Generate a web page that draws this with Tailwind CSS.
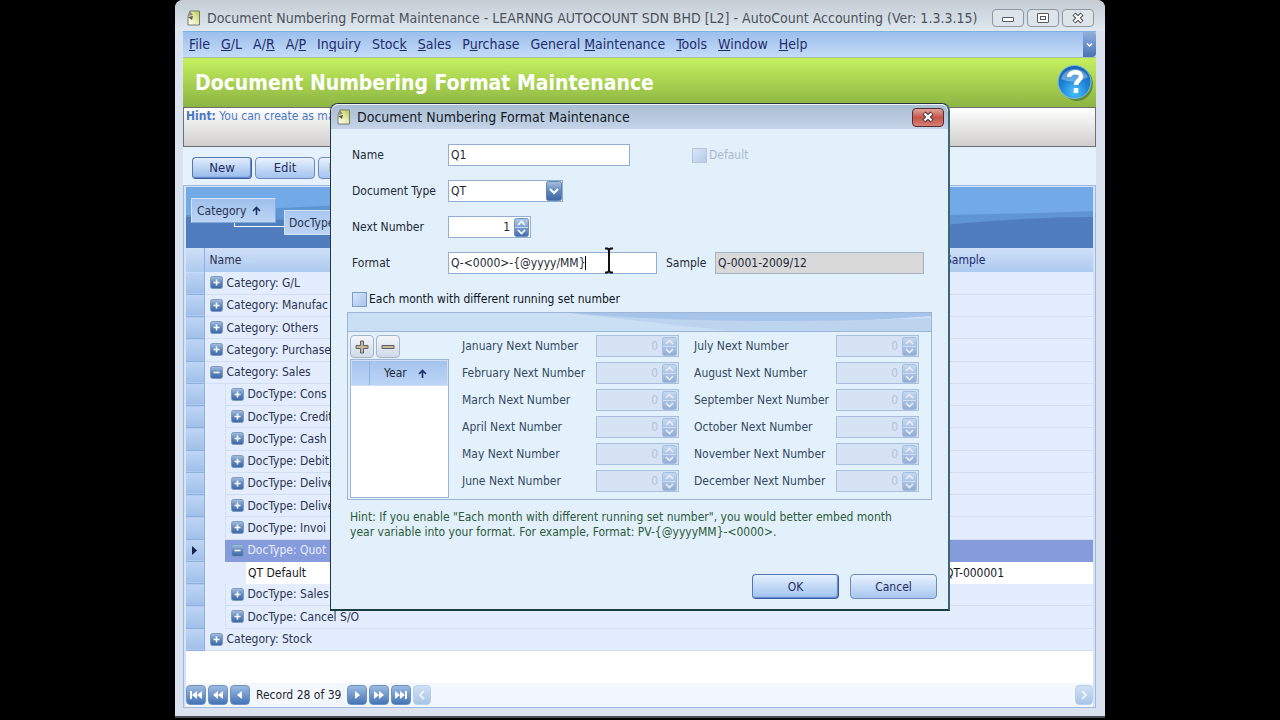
<!DOCTYPE html>
<html lang="en">
<head>
<meta charset="utf-8">
<title>Document Numbering Format Maintenance</title>
<script src="https://cdn.jsdelivr.net/npm/@tailwindcss/browser@4"></script>
</head>
<body class="bg-black font-['DejaVu_Sans_Condensed','DejaVu_Sans',sans-serif] text-xs text-[#2a3350]">
<svg class="absolute h-0 w-0" aria-hidden="true">
  <defs>
    <linearGradient id="gBlue" x1="0" y1="0" x2="0" y2="1"><stop offset="0" stop-color="#b5cdec"/><stop offset="1" stop-color="#3f6cae"/></linearGradient>
    <linearGradient id="gDrop" x1="0" y1="0" x2="0" y2="1"><stop offset="0" stop-color="#a9c0de"/><stop offset="0.5" stop-color="#6088bd"/><stop offset="1" stop-color="#3c66a5"/></linearGradient>
    <radialGradient id="gHelp" cx="0.5" cy="0.8" r="0.8"><stop offset="0" stop-color="#49c4fb"/><stop offset="0.5" stop-color="#2185d9"/><stop offset="1" stop-color="#1a5fae"/></radialGradient>
    <linearGradient id="gDoc" x1="1" y1="0" x2="0" y2="1"><stop offset="0" stop-color="#b5c840"/><stop offset="0.5" stop-color="#e8edb0"/><stop offset="1" stop-color="#ffffff"/></linearGradient>
    <symbol id="doc" viewBox="0 0 14 16"><path d="M3 1h9.500v14H1V6z" fill="url(#gDoc)" stroke="#777b6c"/><path d="M3 1L1 6l5-1z" fill="#8e9184"/><path d="M1 7l5-1-1 4z" fill="#55584c"/></symbol>
    <symbol id="plus" viewBox="0 0 13 13"><rect x="0.500" y="0.500" width="12" height="12" rx="2" fill="url(#gDrop)" stroke="#7d9cc4"/><path d="M6.500 3.500v6M3.500 6.500h6" stroke="#fff" stroke-width="1.500"/></symbol>
    <symbol id="minus" viewBox="0 0 13 13"><rect x="0.500" y="0.500" width="12" height="12" rx="2" fill="url(#gDrop)" stroke="#7d9cc4"/><path d="M3.500 6.500h6" stroke="#fff" stroke-width="1.500"/></symbol>
    <symbol id="spin" viewBox="0 0 15 19"><rect x="0.500" y="0.500" width="14" height="18" rx="2" fill="url(#gBlue)" stroke="#6d8fbd"/><path d="M1 9.500h13" stroke="#c8d9ef"/><path d="M4 7l3.500-3.500L11 7M4 12l3.500 3.500L11 12" fill="none" stroke="#fff" stroke-width="1.600"/></symbol>
    <symbol id="up" viewBox="0 0 9 9"><path d="M4.500 9V2M1 5l3.500-3.500L8 5" fill="none" stroke="#1c2f66" stroke-width="1.600"/></symbol>
  </defs>
</svg>

<main class="relative mx-auto flex h-[718px] w-full max-w-[930px] flex-col overflow-hidden rounded-t-lg border-b-2 border-[#4b4a50] bg-[#d9e2ee] pr-[9px] pl-2">
  <header class="-mr-[9px] -ml-2 flex h-[31px] shrink-0 items-center bg-gradient-to-b from-[#c4cbd3] to-[#dfe9f2] pt-[5px] pr-[11px] pl-[12px]">
    <svg class="h-4 w-[14px]"><use href="#doc"/></svg>
    <h1 class="ml-[6px] flex-1 text-[14px] whitespace-nowrap text-[#4d5258]">Document Numbering Format Maintenance - LEARNNG AUTOCOUNT SDN BHD [L2] - AutoCount Accounting (Ver: 1.3.3.15)</h1>
    <div class="flex gap-[3px]">
      <button aria-label="Minimize" class="grid h-[18px] w-8 place-items-center rounded-sm border border-[#8f989f] bg-[#dde4ea]"><svg class="h-3 w-[14px]" viewBox="0 0 14 12"><rect x="1.500" y="5.500" width="11" height="4" rx="0.500" fill="#fff" stroke="#55585d"/></svg></button>
      <button aria-label="Restore" class="grid h-[18px] w-8 place-items-center rounded-sm border border-[#8f989f] bg-[#dde4ea]"><svg class="h-3 w-[14px]" viewBox="0 0 14 12"><rect x="1.500" y="1.500" width="11" height="9" rx="0.500" fill="#fff" stroke="#55585d"/><rect x="4.500" y="4.500" width="5" height="3" fill="#fff" stroke="#55585d"/></svg></button>
      <button aria-label="Close" class="grid h-[18px] w-8 place-items-center rounded-sm border border-[#8f989f] bg-[#dde4ea]"><svg class="h-3 w-[14px]" viewBox="0 0 14 12"><path d="M3 2l8 8M11 2l-8 8" stroke="#55585d" stroke-width="4.500"/><path d="M3.500 2.500l7 7M10.500 2.500l-7 7" stroke="#fff" stroke-width="2.200"/></svg></button>
    </div>
  </header>

  <nav class="flex h-[27px] shrink-0 items-center gap-[11px] border-t border-b border-t-[#7fb0e0] border-b-[#a5bfa8] bg-gradient-to-b from-[#9dbfec] to-[#c3dbf8] pl-[6px] text-[14px] whitespace-nowrap text-[#1f2c6b]">
    <a href="#"><u>F</u>ile</a><a href="#"><u>G</u>/L</a><a href="#">A/<u>R</u></a><a href="#">A/<u>P</u></a><a href="#">In<u>q</u>uiry</a><a href="#">Stoc<u>k</u></a><a href="#"><u>S</u>ales</a><a href="#">P<u>u</u>rchase</a><a href="#">General <u>M</u>aintenance</a><a href="#"><u>T</u>ools</a><a href="#"><u>W</u>indow</a><a href="#"><u>H</u>elp</a>
    <button aria-label="More menus" class="ml-auto grid h-full w-[13px] place-items-center rounded-r-sm bg-gradient-to-b from-[#8fb0dc] to-[#4a73b3]"><svg class="h-[6px] w-[7px]" viewBox="0 0 7 6"><path d="M1 1.500L3.500 4L6 1.500" fill="none" stroke="#fff" stroke-width="1.500"/></svg></button>
  </nav>

  <section class="flex h-[49px] shrink-0 items-center bg-gradient-to-b from-[#c5f05e] to-[#8cb443] pr-[3px] pl-3">
    <h2 class="text-[21px] font-bold whitespace-nowrap text-white">Document Numbering Format Maintenance</h2>
    <button aria-label="Help" class="ml-auto"><svg class="h-[38px] w-[36px]" viewBox="0 0 36 38"><ellipse cx="20" cy="20" rx="16" ry="17" fill="#4b7334" opacity="0.700"/><circle cx="17.500" cy="18" r="16.500" fill="url(#gHelp)" stroke="#79bdf0"/><path d="M4 15a14 12 0 0 1 27-2c-8 5-19 6-27 2z" fill="#fff" opacity="0.300"/><path d="M12 13c0-6 12-6.500 12-0.500 0 4-5 4-5 8.500M19 24v5" fill="none" stroke="#fff" stroke-width="4.500"/></svg></button>
  </section>

  <p class="h-10 shrink-0 border border-[#6d6f70] bg-gradient-to-b from-white to-[#d0cfcd] px-[2px] text-[12px] leading-[16px] whitespace-nowrap text-[#4a78c8]"><b>Hint:</b> You can create as many</p>

  <div class="flex h-[38px] shrink-0 items-center gap-[3px] bg-[#e5f1fc] pt-1 pl-[9px] text-[13px] text-[#1f2c5e]">
    <button class="h-[22px] w-[60px] rounded-sm border border-[#5377b2] border-r-[#3b5da0] border-b-[#3b5da0] bg-gradient-to-b from-[#e4effc] to-[#94b9ea] shadow-[inset_-1px_-1px_1px_#5d86c8]">New</button>
    <button class="h-[22px] w-[60px] rounded-sm border border-[#6d8cbc] bg-gradient-to-b from-[#e8f2fd] to-[#a3c3ef]">Edit</button>
    <button class="h-[22px] w-[60px] rounded-sm border border-[#6d8cbc] bg-gradient-to-b from-[#e8f2fd] to-[#a3c3ef]">Delete</button>
  </div>

  <section class="mb-2 flex flex-1 flex-col border border-[#9fb9dc] bg-[#d3e3f8] px-[2px] pt-px">
    <div class="relative h-[61px] shrink-0 overflow-hidden">
      <svg class="absolute inset-0 h-full w-full" viewBox="0 0 908 61" preserveAspectRatio="none"><rect width="908" height="61" fill="#72aae7"/><path d="M0 28Q180 10 420 22T908 24V61H0z" fill="#5f95d3"/><path d="M0 30Q150 32 350 50T720 42Q830 30 908 30V61H0z" fill="#4f7dbd"/></svg>
      <div class="relative flex gap-2 pt-[11px] pl-[5px] text-[12px]">
        <button class="flex h-[25px] w-[85px] items-center gap-[6px] border border-[#d3e4fa] border-r-[#84a9dc] border-b-[#84a9dc] bg-gradient-to-b from-[#9fc0ec] to-[#bdd5f5] px-[5px]">Category <svg class="h-[9px] w-[9px]"><use href="#up"/></svg></button>
        <button class="mt-3 h-[25px] w-[86px] border border-[#d3e4fa] border-r-[#84a9dc] bg-gradient-to-b from-[#a9c8f0] to-[#bdd5f5] px-1 text-left">DocType</button>
      </div>
      <div class="absolute top-[36px] left-12 h-[4px] w-[50px] border-b border-l border-white"></div>
    </div>
    <table class="h-[403px] w-full shrink-0 table-fixed border-collapse text-left text-[12px] whitespace-nowrap">
      <colgroup><col class="w-[18px]"><col class="w-[21px]"><col class="w-[21px]"><col><col class="w-[148px]"></colgroup>
      <thead>
        <tr class="h-6 bg-gradient-to-b from-[#cfe0f7] to-[#adcaf0]"><td class="border-r border-[#8eb1e0]"></td><th colspan="3" class="pl-[5px] font-normal">Name</th><th class="font-normal text-[#1d2a70]">Sample</th></tr>
      </thead>
      <tbody id="rows" class="bg-[#e3edfd] leading-4"></tbody>
    </table>
    <div class="flex-1 bg-white"></div>
    <div class="flex h-6 shrink-0 items-center gap-[2px] bg-[#f2f8fe] text-[12px] text-[#1f2530]" id="pager">
    </div>
  </section>

  <div role="dialog" aria-labelledby="dlgTitle" class="absolute inset-x-[155px] top-[103px] flex h-[508px] flex-col rounded-t-lg border border-r-2 border-b-2 border-[#27363f] border-r-[#3d6670] border-b-[#183c40] bg-[#e2f0fc]">
    <div class="flex h-[25px] shrink-0 items-center rounded-t-lg border-t border-white/70 bg-gradient-to-b from-[#a9bdd2] to-[#c5d4e8] pr-[4px] pl-[6px]">
      <svg class="h-4 w-[14px]"><use href="#doc"/></svg>
      <h3 id="dlgTitle" class="ml-[6px] flex-1 text-[14px] whitespace-nowrap text-[#151a26]">Document Numbering Format Maintenance</h3>
      <button aria-label="Close dialog" class="grid h-[19px] w-8 place-items-center rounded-sm border border-[#552a30] bg-gradient-to-b from-[#e0a29a] via-[#c4554b] to-[#d58074]"><svg class="h-3 w-[14px]" viewBox="0 0 14 12"><path d="M3 2l8 8M11 2l-8 8" stroke="#553238" stroke-width="4.500"/><path d="M3.500 2.500l7 7M10.500 2.500l-7 7" stroke="#fff" stroke-width="2.400"/></svg></button>
    </div>

    <form class="flex flex-1 flex-col px-[16px] pt-[15px] pb-[10px] text-[#222a35]">
      <div class="flex flex-col gap-[14px] pl-[5px]">
        <div class="flex h-[22px] items-center"><label for="fName" class="w-24">Name</label><input id="fName" value="Q1" class="h-[22px] w-[182px] border border-[#93afd0] bg-white px-[2px]">
          <label class="ml-[62px] flex items-center gap-[2px] text-[#a9b9cc]"><input type="checkbox" disabled class="h-[15px] w-[15px] appearance-none border border-[#b4c5dd] bg-gradient-to-br from-[#dae6f6] to-[#b6cae8]">Default</label></div>
        <div class="flex h-[22px] items-center"><label for="fType" class="w-24 whitespace-nowrap">Document Type</label>
          <div class="relative"><select id="fType" class="block h-[22px] w-[115px] appearance-none border border-[#93afd0] bg-white px-[2px]"><option>QT</option></select>
            <svg class="pointer-events-none absolute top-px right-px h-5 w-4" viewBox="0 0 16 20"><rect x="0.500" y="0.500" width="15" height="19" rx="2" fill="url(#gDrop)" stroke="#5f83b5"/><path d="M4 8l4 4l4-4" fill="none" stroke="#fff" stroke-width="2"/></svg></div></div>
        <div class="flex h-[22px] items-center"><label for="fNext" class="w-24">Next Number</label>
          <div class="flex h-[22px] w-[83px] items-center border border-[#93afd0] bg-white pr-px"><input id="fNext" value="1" class="w-0 flex-1 pr-1 text-right"><button type="button" aria-label="Step next number"><svg class="block h-[19px] w-[15px]"><use href="#spin"/></svg></button></div></div>
        <div class="flex h-[22px] items-center"><label for="fFormat" class="w-24">Format</label>
          <div class="relative"><input id="fFormat" value="Q-&lt;0000&gt;-{@yyyy/MM}" class="block h-[22px] w-[209px] border border-[#93afd0] bg-white px-[2px]">
            <i class="absolute top-1 left-[137px] h-[14px] w-px bg-black"></i>
            <svg class="absolute -top-[5px] left-[156px] h-[27px] w-[10px]" viewBox="0 0 10 27"><path d="M1 1.500h2.500L5 3l1.500-1.500H9M5 3v21M1 25.500h2.500L5 24l1.500 1.500H9" fill="none" stroke="#111" stroke-width="2"/></svg></div>
          <label for="fSample" class="w-[58px] pl-[9px]">Sample</label><input id="fSample" readonly value="Q-0001-2009/12" class="h-[22px] w-[209px] border border-[#a6b3c6] bg-[#d9d9da] px-[2px]"></div>
      </div>
      <label class="mt-[16px] ml-[5px] flex h-[18px] items-center gap-[2px] self-start whitespace-nowrap text-[#10141c]"><input type="checkbox" class="h-[15px] w-[15px] appearance-none border border-[#7f9cc8] bg-gradient-to-br from-[#d8e6fa] to-[#a8c3ee]">Each month with different running set number</label>

      <section class="mt-1 h-[188px] border border-[#9db6d8] bg-[#e3f1fd]">
        <svg class="block h-[19px] w-full border-b border-[#9db6d8]" viewBox="0 0 582 18" preserveAspectRatio="none"><rect width="582" height="18" fill="#cbdff4"/><path d="M220 0H582V3Q400 18 220 0z" fill="#a6c4ea"/><path d="M220 0Q370 13 582 5V18H380Q290 8 220 0z" fill="#bdd4ef"/></svg>
        <div class="flex pt-[3px] pl-[2px]">
          <div class="flex w-[99px] flex-col">
            <div class="flex h-6 gap-[2px]">
              <button type="button" aria-label="Add year" class="grid h-[23px] w-6 place-items-center rounded-sm border border-[#a6b5c9] bg-gradient-to-b from-[#f3f6fa] to-[#cfdae8]"><svg class="h-[14px] w-[14px]" viewBox="0 0 14 14"><path d="M5.500 1h3v4.500H13v3H8.500V13h-3V8.500H1v-3h4.500z" fill="#c9b79a" stroke="#5c6068"/></svg></button>
              <button type="button" aria-label="Remove year" class="grid h-[23px] w-6 place-items-center rounded-sm border border-[#a6b5c9] bg-gradient-to-b from-[#f3f6fa] to-[#cfdae8]"><svg class="h-[14px] w-[14px]" viewBox="0 0 14 14"><path d="M1 5.500h12v3H1z" fill="#c9b79a" stroke="#5c6068"/></svg></button>
            </div>
            <div class="h-[139px] border border-[#9db6d8] bg-white">
              <div class="flex h-[26px] items-center border border-[#cfe0f5] bg-gradient-to-b from-[#a5c3ee] to-[#bcd5f6]"><span class="h-full w-[18px] border-r border-[#8fb2e2]"></span><span class="pl-[14px]">Year</span><svg class="ml-[11px] h-[9px] w-[9px]"><use href="#up"/></svg></div>
            </div>
          </div>
          <div id="months" class="ml-[13px] grid auto-rows-[22px] content-start grid-cols-[134px_98px_142px_83px] gap-y-[5px] whitespace-nowrap text-[#34495e]"></div>
        </div>
      </section>
      <p class="mt-[10px] ml-[3px] text-[12px] leading-[15px] text-[#2c5a38]">Hint: If you enable "Each month with different running set number", you would better embed month<br>year variable into your format. For example, Format: PV-{@yyyyMM}-&lt;0000&gt;.</p>
      <div class="-mr-[5px] mt-auto flex justify-end gap-[11px] text-[#1f2c5e]">
        <button type="button" class="h-[25px] w-[87px] rounded-sm border border-[#5377b2] border-r-[#3b5da0] border-b-[#3b5da0] bg-gradient-to-b from-[#e4effc] to-[#a0c2f0] shadow-[inset_-1px_-1px_1px_#5d86c8]">OK</button>
        <button type="button" class="h-[25px] w-[87px] rounded-sm border border-[#6d8cbc] bg-gradient-to-b from-[#e8f2fd] to-[#a8c6f0]">Cancel</button>
      </div>
    </form>
  </div>
</main>

<script>
const rows = [['c','Category: G/L'],['c','Category: Manufac'],['c','Category: Others'],['c','Category: Purchase'],['o','Category: Sales'],
 ['d','DocType: Cons'],['d','DocType: Credit'],['d','DocType: Cash'],['d','DocType: Debit'],['d','DocType: Deliver'],['d','DocType: Deliver'],['d','DocType: Invoi'],
 ['s','DocType: Quot'],['i','QT Default'],['d','DocType: Sales'],['d','DocType: Cancel S/O'],['c','Category: Stock']];
const label = (icon, t) => `<div class="flex items-center gap-[4px] pl-[5px]"><svg class="h-[13px] w-[13px] shrink-0"><use href="#${icon}"/></svg>${t}</div>`;
document.getElementById('rows').innerHTML = rows.map(([k, t]) => {
  const mark = `<td class="border-y border-r border-t-[#c9dcf5] border-r-[#8eb1e0] border-b-[#8eb1e0] bg-gradient-to-b from-[#bed5f4] to-[#9fbfe9]">${k === 's' ? '<svg class="mx-auto h-[9px] w-[5px]" viewBox="0 0 5 9"><path d="M0 0l5 4.500L0 9z" fill="#16224f"/></svg>' : ''}</td>`;
  if (k === 'c' || k === 'o') return `<tr class="h-[22px]">${mark}<td colspan="4" class="border-b border-[#d2dff2]">${label(k === 'c' ? 'plus' : 'minus', t)}</td></tr>`;
  if (k === 'd') return `<tr class="h-[22px]">${mark}<td></td><td colspan="3" class="border-b border-l border-[#d2dff2]">${label('plus', t)}</td></tr>`;
  if (k === 's') return `<tr class="h-[22px]">${mark}<td></td><td colspan="3" class="border-b border-l border-[#869bdc] bg-[#869bdc] text-[#e6edff]">${label('minus', t)}</td></tr>`;
  return `<tr class="h-[22px] text-[#15181f]">${mark}<td></td><td></td><td class="bg-white pl-[2px]">${t}</td><td class="bg-white">QT-000001</td></tr>`;
}).join('');

const months = ['January','July','February','August','March','September','April','October','May','November','June','December'];
document.getElementById('months').innerHTML = months.map(m =>
  `<label for="n${m}" class="leading-[22px]">${m} Next Number</label><div class="flex h-[22px] w-[83px] items-center border border-[#a9bfdf] bg-[#d5e3f5] pr-px"><input id="n${m}" disabled value="0" class="w-0 flex-1 pr-1 text-right text-[#b2c3dc]"><button type="button" disabled aria-label="Step ${m}" class="opacity-45"><svg class="block h-[19px] w-[15px]"><use href="#spin"/></svg></button></div>`).join('');

const btn = (name, d) => `<button aria-label="${name}" class="grid h-5 w-5 place-items-center rounded-sm border border-[#6f92c2] bg-gradient-to-b from-[#9dbbe2] to-[#4574b5]"><svg class="h-[10px] w-3" viewBox="0 0 12 10"><path d="${d}" fill="#fff"/></svg></button>`;
const dim = (name, d, extra) => `<button disabled aria-label="${name}" class="grid h-5 w-[18px] place-items-center rounded-sm border border-[#b9d0ea] bg-gradient-to-b from-[#cfe0f3] to-[#a8c5e6] ${extra}"><svg class="h-[10px] w-3" viewBox="0 0 12 10"><path d="${d}" fill="none" stroke="#e8f2fc" stroke-width="2"/></svg></button>`;
document.getElementById('pager').innerHTML =
  btn('First', 'M0 1h2v8H0zM7 1v8L2 5zM12 1v8L7 5z') + btn('Previous page', 'M6 1v8L1 5zM11 1v8L6 5z') + btn('Previous', 'M8 1v8L3 5z') +
  '<span class="px-[4px] whitespace-nowrap">Record 28 of 39</span>' +
  btn('Next', 'M4 1v8l5-4z') + btn('Next page', 'M1 1v8l5-4zM6 1v8l5-4z') + btn('Last', 'M0 1v8l5-4zM5 1v8l5-4zM10 1h2v8h-2z') +
  dim('Scroll left', 'M8 1L4 5l4 4', '') + dim('Scroll right', 'M4 1l4 4l-4 4', 'ml-auto');
</script>
</body>
</html>
